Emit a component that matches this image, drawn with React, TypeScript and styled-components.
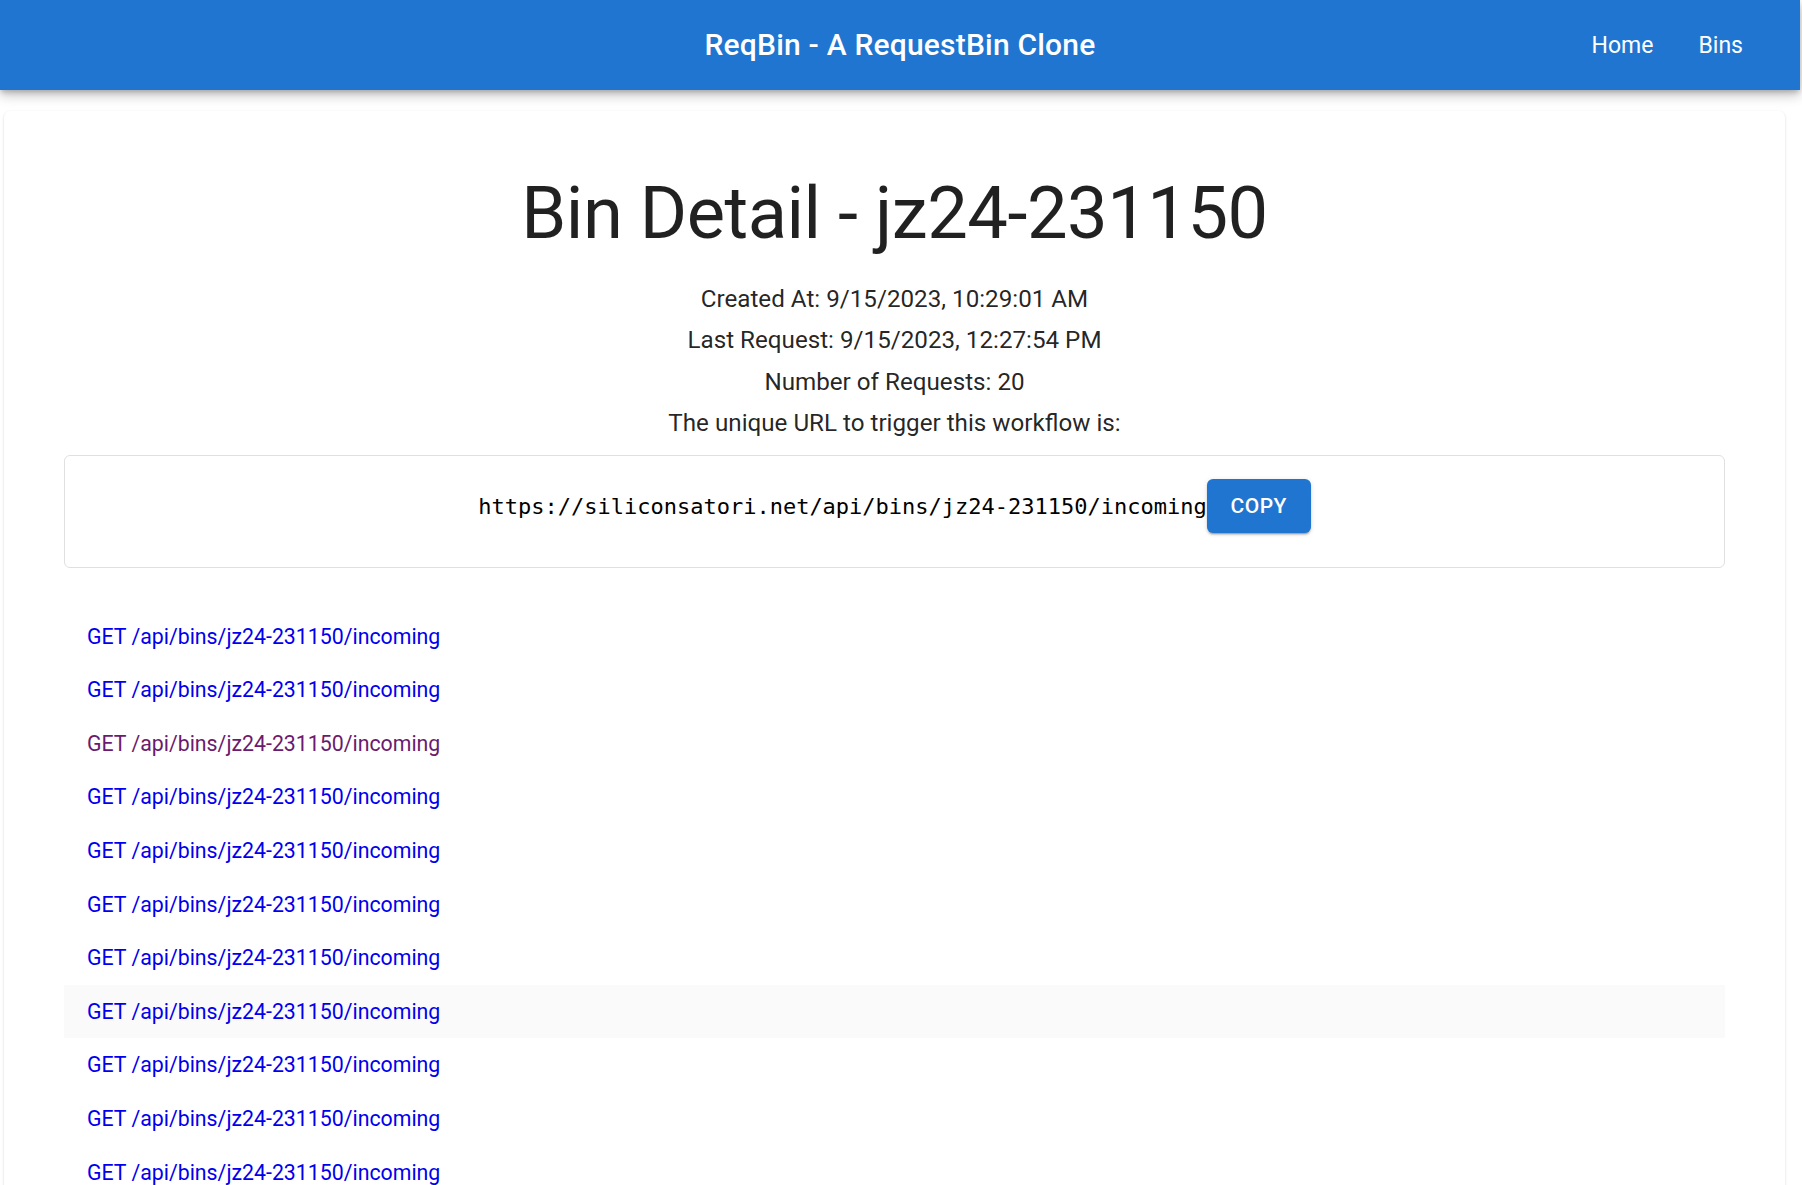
import styled, { createGlobalStyle } from 'styled-components';

const binId = 'jz24-231150';
const binUrl = `https://siliconsatori.net/api/bins/${binId}/incoming`;

// visited flag mirrors the purple link in the list
const requests = Array.from({ length: 20 }, (_, i) => ({
  id: i,
  method: 'GET',
  path: `/api/bins/${binId}/incoming`,
  visited: i === 2,
  hovered: i === 7,
}));

const GlobalStyle = createGlobalStyle`
  html, body {
    margin: 0;
    padding: 0;
    background: #ffffff;
  }

  body {
    font-family: Roboto, "Noto Sans", Arial, sans-serif;
    color: rgba(0, 0, 0, 0.87);
  }
`;

const App = () => {
  return (
    <>
      <GlobalStyle />
      <AppBar>
        <BarTitle>ReqBin - A RequestBin Clone</BarTitle>
        <Nav>
          <NavLink href='#'>Home</NavLink>
          <NavLink href='#'>Bins</NavLink>
        </Nav>
      </AppBar>

      <Page>
        <Card>
          <Title>Bin Detail - {binId}</Title>
          <Info>Created At: 9/15/2023, 10:29:01 AM</Info>
          <Info>Last Request: 9/15/2023, 12:27:54 PM</Info>
          <Info>Number of Requests: 20</Info>
          <Info>The unique URL to trigger this workflow is:</Info>

          <UrlBox>
            <UrlText>{binUrl}</UrlText>
            <CopyButton>COPY</CopyButton>
          </UrlBox>

          <RequestList>
            {requests.map((r) => (
              <RequestRow key={r.id} $hovered={r.hovered}>
                <RequestLink href='#' $visited={r.visited}>
                  {r.method} {r.path}
                </RequestLink>
              </RequestRow>
            ))}
          </RequestList>
        </Card>
      </Page>
    </>
  );
};

const AppBar = styled.header`
  position: relative;
  z-index: 2;
  height: 90px;
  margin-right: 2px;
  display: flex;
  align-items: center;
  justify-content: center;
  background: #1f75cf;
  color: #ffffff;
  box-shadow: 0px 3px 5px -1px rgba(0, 0, 0, 0.2), 0px 6px 10px 0px rgba(0, 0, 0, 0.14),
    0px 1px 18px 0px rgba(0, 0, 0, 0.12);
`;

const BarTitle = styled.h1`
  margin: 0;
  font-weight: 500;
  font-size: 30px;
  line-height: 1.6;
  letter-spacing: 0.2px;
`;

const Nav = styled.nav`
  position: absolute;
  right: 57px;
  top: 0;
  height: 100%;
  display: flex;
  align-items: center;
  gap: 45px;
`;

const NavLink = styled.a`
  color: #ffffff;
  text-decoration: none;
  font-size: 23px;
  font-weight: 400;
`;

const Page = styled.main`
  padding: 21px 17px 0 4px;
`;

const Card = styled.section`
  background: #ffffff;
  border-radius: 6px;
  box-shadow: 0px 2px 1px -1px rgba(0, 0, 0, 0.2), 0px 1px 1px 0px rgba(0, 0, 0, 0.14),
    0px 1px 3px 0px rgba(0, 0, 0, 0.12);
  padding: 58px 60px 40px;
  display: flex;
  flex-direction: column;
  align-items: stretch;
  text-align: center;
`;

const Title = styled.h2`
  margin: 0 0 25px;
  font-weight: 400;
  font-size: 72.3px;
  line-height: 89px;
  letter-spacing: -0.5px;
  color: rgba(0, 0, 0, 0.87);
`;

const Info = styled.p`
  margin: 0 0 7.8px;
  font-size: 24.2px;
  line-height: 33.6px;
  color: rgba(0, 0, 0, 0.87);
`;

const UrlBox = styled.div`
  margin-top: 6px;
  height: 113px;
  box-sizing: border-box;
  border: 1px solid #e0e0e0;
  border-radius: 6px;
  display: flex;
  align-items: center;
  justify-content: center;
  padding-bottom: 10px;
`;

const UrlText = styled.code`
  font-family: "DejaVu Sans Mono", "Liberation Mono", monospace;
  font-size: 22px;
  color: #000000;
`;

const CopyButton = styled.button`
  width: 104px;
  height: 54px;
  border: none;
  border-radius: 6px;
  background: #1f75cf;
  color: #ffffff;
  font-family: Roboto, Arial, sans-serif;
  font-weight: 500;
  font-size: 21px;
  letter-spacing: 0.5px;
  cursor: pointer;
  box-shadow: 0px 3px 1px -2px rgba(0, 0, 0, 0.2), 0px 2px 2px 0px rgba(0, 0, 0, 0.14),
    0px 1px 5px 0px rgba(0, 0, 0, 0.12);
`;

const RequestList = styled.ul`
  list-style: none;
  margin: 42px 0 0;
  padding: 0;
  text-align: left;
`;

const RequestRow = styled.li<{ $hovered?: boolean }>`
  padding: 10px 23px;
  font-size: 21.3px;
  line-height: 33.6px;
  background: ${(p) => (p.$hovered ? '#fafafa' : 'transparent')};
`;

const RequestLink = styled.a<{ $visited?: boolean }>`
  color: ${(p) => (p.$visited ? '#6a1b6e' : '#0000ee')};
  text-decoration: none;
`;

export default App;
